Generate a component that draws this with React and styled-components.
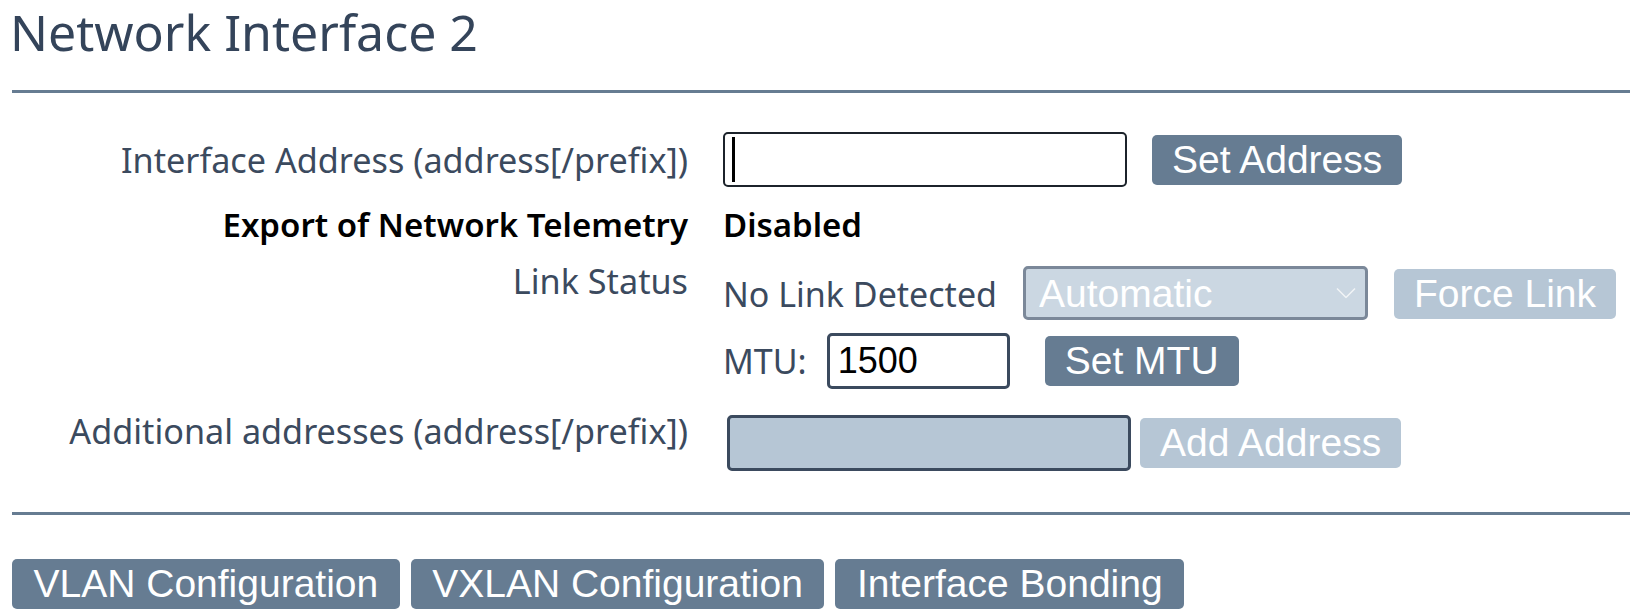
import styled, { createGlobalStyle } from "styled-components";

const GlobalStyle = createGlobalStyle`
    body {
        margin: 0;
        background: #fff;
        font-family: "Noto Sans", "Open Sans", sans-serif;
    }
`

export default function App() {
    return (
        <>
            <GlobalStyle />
            <Page>
                <Title>Network Interface 2</Title>
                <Rule $top={28} />
                <Form>
                    <Row>
                        <Label>Interface Address (address[/prefix])</Label>
                        <Line $gap={25}>
                            <Field>
                                <TextInput type="text" />
                                <Caret />
                            </Field>
                            <Button>Set Address</Button>
                        </Line>
                    </Row>
                    <Row $top={15}>
                        <Label $strong>Export of Network Telemetry</Label>
                        <Value $strong>Disabled</Value>
                    </Row>
                    <Row $top={10} $align="start">
                        <Label>Link Status</Label>
                        <Stack $pad={9}>
                            <Line $gap={26} $align="baseline">
                                <Value>No Link Detected</Value>
                                <SelectBox>
                                    <Select disabled defaultValue="auto">
                                        <option value="auto">Automatic</option>
                                    </Select>
                                    <Chevron width="20" height="11" viewBox="0 0 20 11">
                                        <path d="M1 1 L10 10 L19 1" fill="none" stroke="#f1f4f7" strokeWidth="1.5" />
                                    </Chevron>
                                </SelectBox>
                                <Button disabled>Force Link</Button>
                            </Line>
                            <Line $gap={20} $top={13}>
                                <Value>MTU:</Value>
                                <MtuInput type="text" defaultValue="1500" />
                                <Button $left={15}>Set MTU</Button>
                            </Line>
                        </Stack>
                    </Row>
                    <Row $top={18} $align="start">
                        <Label>Additional addresses (address[/prefix])</Label>
                        <Stack $pad={8}>
                            <Line $gap={9}>
                                <AddressInput type="text" disabled />
                                <Button disabled>Add Address</Button>
                            </Line>
                        </Stack>
                    </Row>
                </Form>
                <Rule $top={41} />
                <Toolbar>
                    <Button $wide>VLAN Configuration</Button>
                    <Button $wide>VXLAN Configuration</Button>
                    <Button $wide>Interface Bonding</Button>
                </Toolbar>
            </Page>
        </>
    )
}

const Page = styled.div`
    padding-left: 12px;
`
const Title = styled.h1`
    margin: 2px 0 0 -2px;
    font-size: 50px;
    font-weight: 400;
    line-height: 1.2;
    color: #34445a;
`
const Rule = styled.hr`
    margin: ${p => p.$top}px 0 0;
    height: 0;
    border: 0;
    border-top: 3px solid #667c92;
`
const Form = styled.div`
    display: flex;
    flex-direction: column;
    padding-top: 39px;
`
const Row = styled.div`
    display: grid;
    grid-template-columns: 676px 1fr;
    column-gap: 35px;
    align-items: ${p => p.$align || "center"};
    margin-top: ${p => p.$top || 0}px;
`
const Label = styled.div`
    text-align: right;
    white-space: nowrap;
    font-size: ${p => (p.$strong ? 33 : 34.2)}px;
    font-weight: ${p => (p.$strong ? 600 : 400)};
    color: ${p => (p.$strong ? "#000" : "#3b4a5e")};
`
const Value = styled.span`
    white-space: nowrap;
    font-size: ${p => (p.$strong ? 33 : 34)}px;
    font-weight: ${p => (p.$strong ? 600 : 400)};
    color: ${p => (p.$strong ? "#000" : "#3b4a5e")};
`
const Stack = styled.div`
    display: flex;
    flex-direction: column;
    padding-top: ${p => p.$pad || 0}px;
`
const Line = styled.div`
    display: flex;
    align-items: ${p => p.$align || "center"};
    gap: ${p => p.$gap}px;
    margin-top: ${p => p.$top || 0}px;
`
const Button = styled.button`
    font-family: "Liberation Sans", Arial, sans-serif;
    font-size: 39px;
    line-height: normal;
    padding: ${p => (p.$wide ? "3px 21.5px" : "3px 20px")};
    margin-left: ${p => p.$left || 0}px;
    border: 0;
    border-radius: 5px;
    white-space: nowrap;
    color: #fff;
    background: #667c92;
    cursor: pointer;

    &:disabled {
        background: #b6c6d5;
        color: #fff;
        opacity: 1;
        cursor: default;
    }
`
const Field = styled.div`
    position: relative;
    display: flex;
`
const TextInput = styled.input`
    box-sizing: border-box;
    width: 404px;
    height: 55px;
    padding: 0 8px;
    border: 2px solid #1c232b;
    border-radius: 5px;
    font-family: "Liberation Sans", Arial, sans-serif;
    font-size: 36px;
    color: #000;
    outline: none;
`
const Caret = styled.span`
    position: absolute;
    left: 9px;
    top: 5px;
    width: 3px;
    height: 45px;
    background: #000;
`
const MtuInput = styled(TextInput)`
    width: 183px;
    height: 56px;
    border: 3px solid #3b4a5e;
`
const AddressInput = styled(TextInput)`
    width: 404px;
    height: 56px;
    margin-left: 4px;
    border: 3px solid #3b4a5e;
    background: #b6c6d5;

    &:disabled {
        background: #b6c6d5;
        border-color: #3b4a5e;
    }
`
const SelectBox = styled.div`
    position: relative;
    display: flex;
`
const Select = styled.select`
    box-sizing: border-box;
    appearance: none;
    width: 345px;
    height: 54px;
    padding: 0 0 0 13px;
    border: 3px solid #7b8899;
    border-radius: 5px;
    font-family: "Liberation Sans", Arial, sans-serif;
    font-size: 39px;
    color: #fff;
    background: #cbd7e2;

    &:disabled {
        color: #fff;
        opacity: 1;
        border-color: #7b8899;
        background: #cbd7e2;
    }
`
const Chevron = styled.svg`
    position: absolute;
    right: 12px;
    top: 50%;
    transform: translateY(-50%);
    pointer-events: none;
`
const Toolbar = styled.div`
    display: flex;
    gap: 11px;
    margin-top: 44px;
`
